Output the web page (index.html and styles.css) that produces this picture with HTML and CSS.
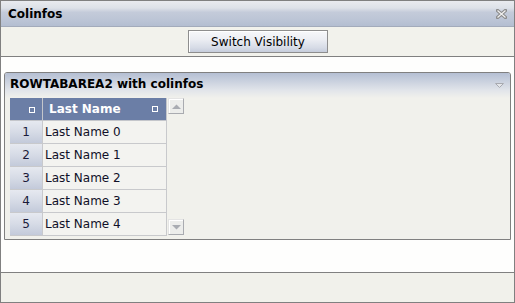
FILE: index.html
```html
<!DOCTYPE html>
<html>
<head>
<meta charset="utf-8">
<link rel="stylesheet" href="styles.css">
</head>
<body>
<div class="window">
  <div class="titlebar">
    <span class="title">Colinfos</span>
    <svg class="close" width="11" height="10" viewBox="0 0 11 10">
      <path d="M1.5 1.5 L9.5 8.5 M9.5 1.5 L1.5 8.5" stroke="#8c8c8c" stroke-width="3.4" stroke-linecap="square" fill="none"/>
      <path d="M1.5 1.5 L9.5 8.5 M9.5 1.5 L1.5 8.5" stroke="#f2f2f2" stroke-width="1.2" fill="none"/>
    </svg>
  </div>
  <div class="toolbar">
    <button class="btn">Switch Visibility</button>
  </div>
  <div class="content">
    <div class="group">
      <div class="group-head">
        <span class="group-title">ROWTABAREA2 with colinfos</span>
        <svg class="collapse" width="9" height="5" viewBox="0 0 9 5">
          <path d="M0.5 0.5 L8.5 0.5 L4.5 4.5 Z" fill="#e4e6ea" stroke="#a8aab0" stroke-width="1"/>
        </svg>
      </div>
      <div class="group-body">
        <table class="grid">
          <thead>
            <tr>
              <th class="rh"><span class="sq"></span></th>
              <th class="ch"><span class="ch-in"><span>Last Name</span><span class="sq"></span></span></th>
            </tr>
          </thead>
          <tbody>
            <tr><td class="rn">1</td><td class="cell">Last Name 0</td></tr>
            <tr><td class="rn">2</td><td class="cell">Last Name 1</td></tr>
            <tr><td class="rn">3</td><td class="cell">Last Name 2</td></tr>
            <tr><td class="rn">4</td><td class="cell">Last Name 3</td></tr>
            <tr><td class="rn">5</td><td class="cell">Last Name 4</td></tr>
          </tbody>
        </table>
        <div class="scroll">
          <div class="sbtn">
            <svg width="9" height="5" viewBox="0 0 9 5"><path d="M0 5 L4.5 0.5 L9 5 Z" fill="#a9acb2"/></svg>
          </div>
          <div class="sbtn">
            <svg width="9" height="5" viewBox="0 0 9 5"><path d="M0 0 L4.5 4.5 L9 0 Z" fill="#a9acb2"/></svg>
          </div>
        </div>
      </div>
    </div>
  </div>
  <div class="statusbar"></div>
</div>
</body>
</html>
```
FILE: styles.css
```css
html, body {
  margin: 0;
  padding: 0;
  background: #ffffff;
}
body {
  font-family: "DejaVu Sans", Verdana, sans-serif;
  font-size: 12px;
  color: #000;
}
.window {
  width: 515px;
  height: 303px;
  box-sizing: border-box;
  border: 1px solid #808080;
  display: flex;
  flex-direction: column;
}
.titlebar {
  height: 26px;
  box-sizing: border-box;
  border-bottom: 1px solid #a3abbb;
  background: linear-gradient(#e9ebef 0%, #dde1e8 28%, #c4cbda 45%, #bcc5d6 75%, #b4bed1 100%);
  display: flex;
  align-items: center;
  justify-content: space-between;
  padding: 1px 7px 0 7px;
}
.title {
  font-weight: bold;
  font-size: 12px;
  color: #000;
}
.close {
  display: block;
  margin-top: -1px;
}
.toolbar {
  height: 30px;
  box-sizing: border-box;
  border-bottom: 1px solid #808080;
  background: #f2f2ec;
  display: flex;
  align-items: center;
  justify-content: center;
}
.btn {
  width: 140px;
  height: 23px;
  box-sizing: border-box;
  border: 1px solid #8e8e8e;
  box-shadow: inset 1px 1px 0 #ffffff;
  background: linear-gradient(#f7f8fa 0%, #eceef3 40%, #d6dbe6 80%, #c6cddc 100%);
  font-family: "DejaVu Sans", Verdana, sans-serif;
  font-size: 12px;
  color: #000;
  padding: 0;
  margin: 0 0 0 1px;
}
.content {
  flex: 1;
  background: #fefefd;
  padding: 15px 3px 0 3px;
}
.group {
  border: 1px solid #808080;
  border-radius: 3px 3px 0 0;
  background: #f1f1ec;
}
.group-head {
  height: 25px;
  box-sizing: border-box;
  padding: 4px 6px 0 5px;
  display: flex;
  justify-content: space-between;
  align-items: flex-start;
  background: linear-gradient(#b5bfd3 0%, #cbd2df 35%, #e2e5ea 70%, #f1f1ec 100%);
  border-radius: 2px 2px 0 0;
}
.group-title {
  font-weight: bold;
  font-size: 12px;
  line-height: 15px;
}
.collapse {
  display: block;
  margin-top: 6px;
}
.group-body {
  display: flex;
  align-items: flex-start;
  gap: 1px;
  padding: 0 0 3px 5px;
}
.grid {
  border-collapse: separate;
  border-spacing: 0;
}
.grid th, .grid td {
  padding: 0;
  height: 23px;
  box-sizing: border-box;
  border-bottom: 1px solid #c8c9cc;
  border-right: 1px solid #c8c9cc;
}
.grid th {
  background: #6b7ea6;
  color: #ffffff;
  font-weight: bold;
  border-bottom-color: #c4c6cb;
  border-right-color: #c4c6cb;
  text-align: left;
}
.rh {
  width: 33px;
  text-align: right;
}
.rh .sq {
  margin-left: 19px;
}
.sq {
  display: inline-block;
  width: 6px;
  height: 6px;
  border: 1px solid #ffffff;
  box-sizing: border-box;
  vertical-align: middle;
}
.ch {
  width: 124px;
}
.ch-in {
  display: flex;
  align-items: center;
  justify-content: space-between;
  padding: 0 8px 0 6px;
  font-size: 12px;
}
.rn {
  background: linear-gradient(#e6e9f0 0%, #d6dbe6 50%, #c3cada 100%);
  text-align: center;
  color: #1a1a3a;
}
.grid td.cell {
  background: #f3f3f0;
  color: #101028;
  padding-left: 2px;
}
.scroll {
  display: flex;
  flex-direction: column;
  justify-content: space-between;
  height: 137px;
  width: 16px;
}
.sbtn {
  width: 16px;
  height: 16px;
  box-sizing: border-box;
  border: 1px solid #a9abb0;
  border-top-color: #e4e4e4;
  border-left-color: #e4e4e4;
  box-shadow: inset 1px 1px 0 #ffffff;
  background: #ecedeb;
  display: flex;
  align-items: center;
  justify-content: center;
}
.sbtn svg {
  display: block;
}
.statusbar {
  height: 30px;
  box-sizing: border-box;
  border-top: 1px solid #808080;
  background: #f1f1eb;
}
```
